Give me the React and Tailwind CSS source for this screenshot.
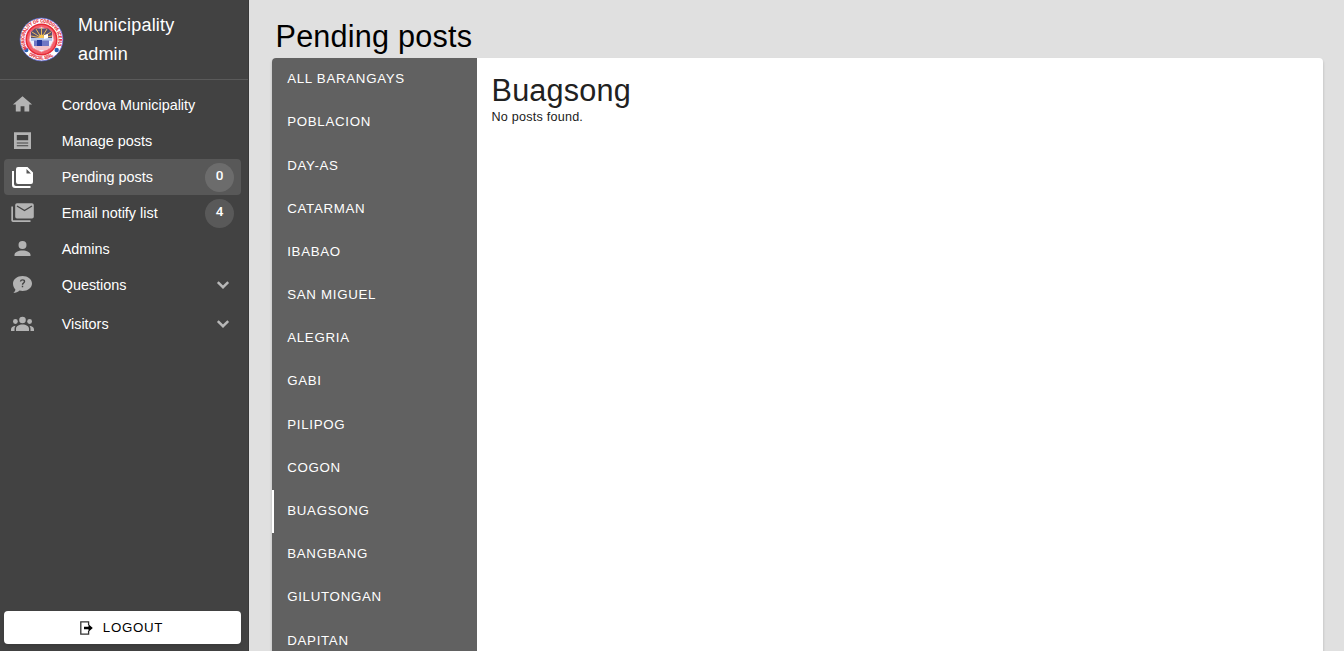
import React from "react";

const Icon = ({ children, active }) => (
  <svg width="25" height="24" viewBox="0 0 25 24" className={`shrink-0 ${active ? "fill-white" : "fill-[#b3b3b3]"}`}>
    {children}
  </svg>
);

const icons = {
  home: <path transform="translate(1 .6) scale(.96 .9)" d="M10,20V14H14V20H19V12H22L12,3L2,12H5V20H10Z" />,
  posts: <path fillRule="evenodd" d="M4 3.200h17V20H4zM6.800 6v5.300h11.400V6zM6.800 13.400v1h11.400v-1zM6.800 16.200v1h11.400v-1z" />,
  pending: (
    <path fillRule="evenodd" d="M8 2h9.500L23 7.500V17q0 2-2 2H8q-2 0-2-2V4q0-2 2-2zM16.500 4v4.500H21zM2 6h2v13q0 2 2 2h14.500v2H5q-3 0-3-3z" />
  ),
  email: (
    <>
      <path d="M7 2.200h15q1.800 0 1.800 1.800v11.800q0 1.800-1.800 1.800H7q-1.800 0-1.800-1.800V4Q5.200 2.200 7 2.200zM1.300 5.500h1.700v13.700h17.500v1.800H3q-1.700 0-1.700-1.700z" />
      <path d="M7 5l7.500 4.500L22 5" fill="none" stroke="#424242" strokeWidth="1.300" />
    </>
  ),
  admin: <path d="M12.500 4a4 4 0 0 1 0 8a4 4 0 0 1 0-8zM12.500 13.500c4.300 0 8 2 8 4.200V19H4.500v-1.300c0-2.200 3.700-4.200 8-4.200z" />,
  question: (
    <>
      <path d="M12.500 3C17.800 3 22 6.200 22 10.500S17.800 18 12.500 18c-1 0-2-.1-2.900-.4C8 19 5.800 20 3.300 20c1.300-1.100 2-2.400 2.100-3.600C3.900 15 3 12.900 3 10.500 3 6.200 7.200 3 12.500 3z" />
      <path d="M10.500 8.500c.2-2.200 4-2.200 4 0 0 1.500-2 1.600-2 3.300M12.500 12.800v1.500" fill="none" stroke="#424242" strokeWidth="1.400" />
    </>
  ),
  visitors: (
    <>
      <circle cx="12.500" cy="8" r="3.300" />
      <circle cx="5.400" cy="9.500" r="2.400" />
      <circle cx="19.600" cy="9.500" r="2.400" />
      <path d="M6 19v-2.300c0-2.300 2.900-4.200 6.500-4.200s6.500 1.900 6.500 4.200V19zM1 19v-1.600c0-2 1.700-3.400 4.500-3.700-.6.900-1 1.900-1 3V19zM24 19v-1.600c0-2-1.700-3.400-4.500-3.700.6.900 1 1.900 1 3V19z" />
    </>
  ),
};

const items = [
  { icon: "home", label: "Cordova Municipality" },
  { icon: "posts", label: "Manage posts" },
  { icon: "pending", label: "Pending posts", count: 0, active: true },
  { icon: "email", label: "Email notify list", count: 4 },
  { icon: "admin", label: "Admins" },
  { icon: "question", label: "Questions", menu: true },
  { icon: "visitors", label: "Visitors", menu: true },
];

const barangays = [
  "All Barangays", "Poblacion", "Day-as", "Catarman", "Ibabao", "San Miguel", "Alegria",
  "Gabi", "Pilipog", "Cogon", "Buagsong", "Bangbang", "Gilutongan", "Dapitan",
];

function Seal() {
  return (
    <svg width="45" height="45" viewBox="0 0 45 45" className="shrink-0">
      <defs>
        <path id="seal-top" d="M8 31.600A17.100 17.100 0 1 1 37 31.600" />
        <path id="seal-bottom" d="M9.800 38A20 20 0 0 0 35.200 38" />
      </defs>
      <circle cx="22.500" cy="22.500" r="21.400" fill="#fff" stroke="#5a62cf" strokeWidth=".8" />
      <circle cx="22.500" cy="22.500" r="15.300" fill="#f2606a" stroke="#e62835" strokeWidth="1.500" />
      <path d="M22.500 10L33 15l2 8-4 8-8.500 4-8.500-4-4-8 2-8z" fill="#eef1fb" stroke="#f89aa2" strokeWidth=".8" />
      <path d="M12 21v-6l4-3.500h13L33 15v6z" fill="#56506e" />
      <path d="M22.500 21L13 15m9.500 6L17 12m5.500 9V11m0 10l5.500-9m-5.500 9l9.500-6M22.500 21L12 19m10.500 2L33 19" stroke="#e9b95a" strokeWidth="1" />
      <circle cx="22.500" cy="20" r="2.400" fill="#f8c552" />
      <path d="M12 21h21v3H12z" fill="#b7c9ee" />
      <path d="M15 23.500h15V29H15z" fill="#7077c4" />
      <path d="M18 23h5v6h-5z" fill="#283b9c" />
      <path d="M25 18l4-1v4l-4 1z" fill="#fff" />
      <path d="M15 29h16l-3 4H18z" fill="#f2c4ca" />
      <circle cx="7.300" cy="33" r="2.200" fill="#2860b0" />
      <circle cx="37.700" cy="33" r="2.200" fill="#2860b0" />
      <g fill="#e6323f" stroke="#e6323f" strokeWidth=".2" fontFamily="Liberation Sans, sans-serif" fontWeight="700" fontSize="4.900">
        <text textLength="69" lengthAdjust="spacingAndGlyphs"><textPath href="#seal-top">MUNICIPALITY OF CORDOVA (CEBU)</textPath></text>
        <text textLength="26" lengthAdjust="spacingAndGlyphs"><textPath href="#seal-bottom">OFFICIAL SEAL</textPath></text>
      </g>
    </svg>
  );
}

function Sidebar() {
  return (
    <aside className="flex w-[249px] shrink-0 flex-col border-r border-[#393939] bg-[#424242] text-white">
      <header className="flex h-20 shrink-0 items-center gap-3.5 border-b border-[#5a5a5a] pl-[19px]">
        <Seal />
        <h1 className="w-32 text-[18px] leading-[29px] tracking-[0.2px]">Municipality admin</h1>
      </header>
      <nav className="flex flex-col px-1 pt-[7px]">
        {items.map((it) => (
          <a
            key={it.label}
            className={`flex h-9 w-[237px] items-center rounded pl-1.5 ${it.active ? "bg-[#585858]" : ""} ${it.icon === "visitors" ? "mt-[3px]" : ""}`}
          >
            <Icon active={it.active}>{icons[it.icon]}</Icon>
            <span className="ml-[26.700px] grow text-[14.400px] leading-5">{it.label}</span>
            {it.count !== undefined && (
              <span className="mr-[7px] flex size-[29px] items-center justify-center rounded-full bg-white/12 pb-0.5 font-['Roboto',sans-serif] text-[13.500px] leading-none font-medium">
                {it.count}
              </span>
            )}
            {it.menu && (
              <svg width="14" height="10" viewBox="0 0 14 10" className="mr-[11px] fill-none stroke-[#b8b8b8]" strokeWidth="2.500">
                <path d="M1.800 2.200L7 7.200l5.200-5" />
              </svg>
            )}
          </a>
        ))}
      </nav>
      <button className="mx-1 mt-auto mb-[7px] flex h-[33px] w-[237px] items-center justify-center rounded bg-white pr-0.5 text-[13.300px] tracking-[0.700px] text-black shadow-md">
        <svg width="14" height="14" viewBox="0 0 14 14" className="mr-[9px]">
          <path d="M8.600 4V.8H.8v12.400h7.800V10" fill="none" stroke="#333" strokeWidth="1.300" />
          <path d="M4 5.700h4.500V3.200L12.800 7l-4.300 3.800V8.300H4z" />
        </svg>
        LOGOUT
      </button>
    </aside>
  );
}

export default function App() {
  return (
    <div className="flex h-[651px] w-full overflow-hidden bg-[#e0e0e0] font-['Liberation_Sans',Arial,sans-serif]">
      <Sidebar />
      <main className="flex min-w-0 grow flex-col pr-[21px] pl-[23px]">
        <h2 className="h-[58px] shrink-0 pt-[16px] pl-[3.500px] text-[30.600px] leading-10 tracking-[0.225px] text-black">Pending posts</h2>
        <div className="flex grow rounded-t bg-white shadow-[0_2px_3px_rgba(0,0,0,0.2)]">
          <div className="flex w-[205px] shrink-0 flex-col rounded-tl bg-[#616161]">
            {barangays.map((b) => (
              <div
                key={b}
                className={`flex h-[43.190px] shrink-0 items-center border-l-2 pb-px pl-[13.200px] text-[13.300px] font-normal tracking-[0.700px] text-white uppercase ${b === "Buagsong" ? "border-white" : "border-transparent"}`}
              >
                {b}
              </div>
            ))}
          </div>
          <section className="pt-3 pl-[14.500px] text-[#212121]">
            <h3 className="text-[30.600px] leading-10 tracking-[0.225px]">Buagsong</h3>
            <p className="text-[12.600px] leading-[15px] tracking-[0.225px]">No posts found.</p>
          </section>
        </div>
      </main>
    </div>
  );
}
